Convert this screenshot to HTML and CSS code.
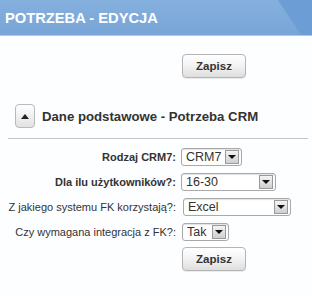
FILE: index.html
```html
<!DOCTYPE html>
<html lang="pl">
<head>
<meta charset="utf-8">
<link rel="stylesheet" href="styles.css">
</head>
<body>
<div class="header"><span class="title">POTRZEBA - EDYCJA</span></div>
<div class="top-actions"><button class="btn">Zapisz</button></div>
<div class="section-head">
  <span class="toggle"><span class="tri-up"></span></span>
  <span class="section-title">Dane podstawowe - Potrzeba CRM</span>
</div>
<div class="divider"></div>
<div class="form">
  <label class="lbl req">Rodzaj CRM7:</label>
  <div class="sel w-crm"><span class="val">CRM7</span><span class="arr"><span class="tri-down"></span></span></div>
  <label class="lbl req">Dla ilu użytkowników?:</label>
  <div class="sel w-users"><span class="val">16-30</span><span class="arr"><span class="tri-down"></span></span></div>
  <label class="lbl">Z jakiego systemu FK korzystają?:</label>
  <div class="sel w-fk"><span class="val">Excel</span><span class="arr"><span class="tri-down"></span></span></div>
  <label class="lbl">Czy wymagana integracja z FK?:</label>
  <div class="sel w-tak"><span class="val">Tak</span><span class="arr"><span class="tri-down"></span></span></div>
  <span></span>
  <div class="bottom-actions"><button class="btn">Zapisz</button></div>
</div>
</body>
</html>
```

FILE: styles.css
```css
html, body { margin: 0; padding: 0; background: #fdfeff; }
body { font-family: "Liberation Sans", Arial, sans-serif; color: #333; width: 312px; height: 296px; overflow: hidden; }

.header {
  position: relative;
  height: 35px;
  line-height: 35px;
  padding-left: 5px;
  background: linear-gradient(to bottom, #85b0de, #78a5d7);
  border-bottom: 1px solid #a9c9ec;
  overflow: hidden;
}
.header::after {
  content: "";
  position: absolute;
  top: 0; left: 0; right: 0; bottom: 0;
  background: #6c9dd4;
  clip-path: polygon(278px 0, 312px 0, 312px 35px, 301px 35px);
}
.title { position: relative; z-index: 1; color: #fff; font-weight: bold; font-size: 14.7px; }

.btn {
  font-family: "Liberation Sans", Arial, sans-serif;
  font-weight: bold;
  font-size: 11.5px;
  color: #333;
  width: 64px;
  height: 24px;
  padding: 0;
  border: 1px solid #b4b4b4;
  border-radius: 4px;
  background: linear-gradient(to bottom, #ffffff 0%, #f4f4f4 45%, #dedede 100%);
  box-shadow: 0 1px 1px rgba(0,0,0,0.08);
}
.top-actions { padding: 18px 0 0 182px; height: 24px; }

.section-head { display: flex; align-items: center; gap: 7px; margin-top: 26px; padding-left: 15px; height: 24px; }
.toggle {
  width: 18px; height: 22px;
  border: 1px solid #b9b9b9;
  border-radius: 4px;
  background: linear-gradient(to bottom, #ffffff, #e2e2e2);
  display: flex; align-items: center; justify-content: center;
}
.tri-up { width: 0; height: 0; border-left: 4px solid transparent; border-right: 4px solid transparent; border-bottom: 5px solid #222; }
.section-title { font-size: 13.2px; color: #333; font-weight: bold; }

.divider { margin: 10px 4px 0 8px; border-top: 1px solid #c4c4c4; }

.form {
  display: grid;
  grid-template-columns: 176px auto;
  grid-auto-rows: 25px;
  column-gap: 5px;
  align-items: center;
  margin-top: 5px;
}
.lbl { text-align: right; font-size: 11px; color: #333; white-space: nowrap; }
.lbl.req { font-weight: bold; }

.sel {
  display: flex; align-items: center; justify-content: space-between;
  height: 18px;
  box-sizing: border-box;
  border: 1px solid #a9a9a9;
  border-radius: 3px;
  box-shadow: inset 0 1px 1px rgba(0,0,0,0.12);
  background: #fff;
  padding: 0 2px 0 4px;
  font-size: 12.5px;
  color: #333;
}
.w-crm { width: 61px; }
.w-users { width: 95px; }
.w-fk { width: 108px; margin-left: 2px; }
.w-tak { width: 47px; margin-left: 1px; }
.arr {
  width: 14px; height: 14px;
  box-sizing: border-box;
  border: 1px solid #9a9a9a;
  background: linear-gradient(to bottom, #f4f4f4, #cfcfcf);
  display: flex; align-items: center; justify-content: center;
}
.tri-down { width: 0; height: 0; border-left: 4px solid transparent; border-right: 4px solid transparent; border-top: 4px solid #111; }
.bottom-actions { margin-top: 4px; margin-left: 1px; }
```
